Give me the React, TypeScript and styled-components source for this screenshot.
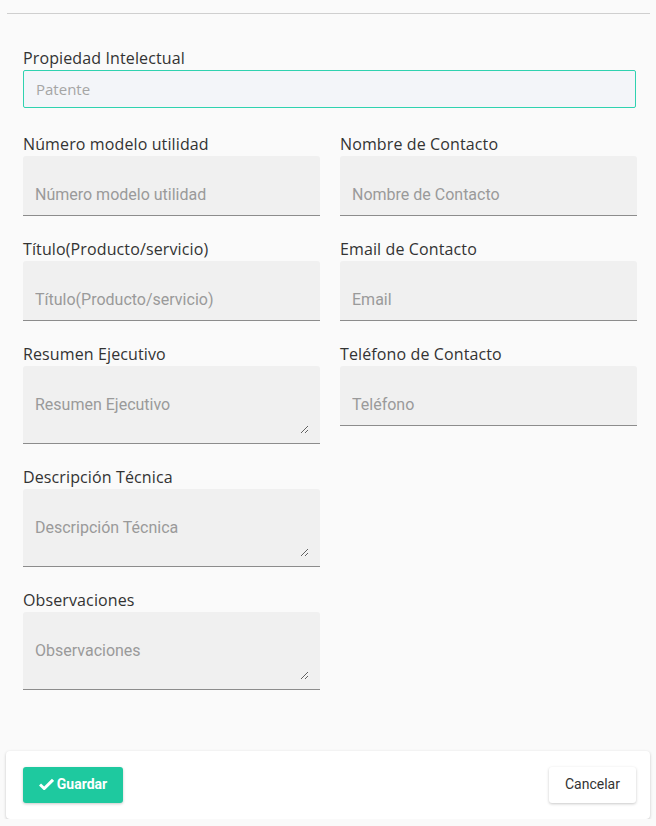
import React from "react";
import styled, { createGlobalStyle } from "styled-components";

const Global = createGlobalStyle`
  html, body { margin: 0; padding: 0; background: #fafafa; }
  body { font-family: "Open Sans", "Liberation Sans", sans-serif; }
  * { box-sizing: border-box; }
`;

const Page = styled.div`
  padding: 13px 6px 0 6px;
`;

const Rule = styled.hr`
  margin: 0 0 0 1px;
  border: 0;
  border-top: 1px solid #cfcfcf;
  height: 0;
`;

const Form = styled.div`
  padding: 33px 14px 0 17px;
  display: flex;
  flex-direction: column;
`;

const Label = styled.label`
  display: block;
  font-family: "Open Sans", sans-serif;
  font-size: 16px;
  letter-spacing: 0.12px;
  line-height: 22px;
  color: #333;
  margin-bottom: 1px;
`;

const SelectBox = styled.input`
  display: block;
  width: 100%;
  height: 38px;
  border: 1px solid #2fd2b0;
  border-radius: 2px;
  background: #f3f5f9;
  padding: 0 12px;
  font-family: "Open Sans", sans-serif;
  font-size: 15px;
  color: #999;
  outline: none;
  &::placeholder { color: #a5a5a5; }
`;

const Columns = styled.div`
  display: grid;
  grid-template-columns: 297px 297px;
  column-gap: 20px;
  margin-top: 25px;
  align-items: start;
`;

const Column = styled.div`
  display: flex;
  flex-direction: column;
  gap: 22px;
`;

const Field = styled.div`
  display: flex;
  flex-direction: column;
`;

const TextInput = styled.input`
  display: block;
  width: 100%;
  height: 60px;
  border: 0;
  border-bottom: 1px solid #8c8c8c;
  border-radius: 3px 3px 0 0;
  background: #f0f0f0;
  font-family: Roboto, "Liberation Sans", sans-serif;
  font-size: 16px;
  color: #333;
  outline: none;
  padding: 18px 12px 0 12px;
  &::placeholder { color: #9a9a9a; }
`;

const AreaWrap = styled.div`
  height: 78px;
  border-bottom: 1px solid #8c8c8c;
  border-radius: 3px 3px 0 0;
  background: #f0f0f0;
  padding: 29px 11px 9px 12px;
  display: flex;
`;

const TextArea = styled.textarea`
  flex: 1;
  display: block;
  width: 100%;
  height: 39px;
  border: 0;
  background: transparent;
  padding: 0;
  margin: 0;
  font-family: Roboto, "Liberation Sans", sans-serif;
  font-size: 16px;
  line-height: 19px;
  color: #333;
  outline: none;
  resize: vertical;
  &::placeholder { color: #9a9a9a; }
`;

const Footer = styled.div`
  margin: 61px 0 0 0;
  background: #fff;
  border-radius: 4px;
  box-shadow: 0 1px 3px rgba(0, 0, 0, 0.22);
  padding: 16px 14px 16px 17px;
  display: flex;
  justify-content: space-between;
  align-items: center;
`;

const Button = styled.button<{ $primary?: boolean }>`
  height: 36px;
  border: 0;
  border-radius: 3px;
  font-family: Roboto, "Liberation Sans", sans-serif;
  font-size: 14px;
  cursor: pointer;
  display: inline-flex;
  align-items: center;
  justify-content: center;
  gap: 3px;
  padding: 0 0 2px 0;
  box-shadow: 0 1px 3px rgba(0, 0, 0, 0.22);
  background: ${(p) => (p.$primary ? "#1ec99f" : "#fff")};
  color: ${(p) => (p.$primary ? "#fff" : "#333")};
  font-weight: ${(p) => (p.$primary ? 700 : 400)};
  width: ${(p) => (p.$primary ? "100px" : "87px")};
`;

const Check = () => (
  <svg width="15" height="12" viewBox="0 0 15 12" aria-hidden="true">
    <path d="M1 6.5 L5.2 10.5 L14 1.8" stroke="#fff" strokeWidth="3" fill="none" strokeLinejoin="miter" />
  </svg>
);

type F = { label: string; placeholder: string; area?: boolean };

const left: F[] = [
  { label: "Número modelo utilidad", placeholder: "Número modelo utilidad" },
  { label: "Título(Producto/servicio)", placeholder: "Título(Producto/servicio)" },
  { label: "Resumen Ejecutivo", placeholder: "Resumen Ejecutivo", area: true },
  { label: "Descripción Técnica", placeholder: "Descripción Técnica", area: true },
  { label: "Observaciones", placeholder: "Observaciones", area: true },
];

const right: F[] = [
  { label: "Nombre de Contacto", placeholder: "Nombre de Contacto" },
  { label: "Email de Contacto", placeholder: "Email" },
  { label: "Teléfono de Contacto", placeholder: "Teléfono" },
];

const renderField = (f: F) => (
  <Field key={f.label}>
    <Label>{f.label}</Label>
    {f.area ? (
      <AreaWrap>
        <TextArea placeholder={f.placeholder} />
      </AreaWrap>
    ) : (
      <TextInput placeholder={f.placeholder} />
    )}
  </Field>
);

export default function App() {
  return (
    <Page>
      <Global />
      <Rule />
      <Form>
        <Field>
          <Label>Propiedad Intelectual</Label>
          <SelectBox placeholder="Patente" />
        </Field>
        <Columns>
          <Column>{left.map(renderField)}</Column>
          <Column>{right.map(renderField)}</Column>
        </Columns>
      </Form>
      <Footer>
        <Button $primary>
          <Check />
          Guardar
        </Button>
        <Button>Cancelar</Button>
      </Footer>
    </Page>
  );
}
